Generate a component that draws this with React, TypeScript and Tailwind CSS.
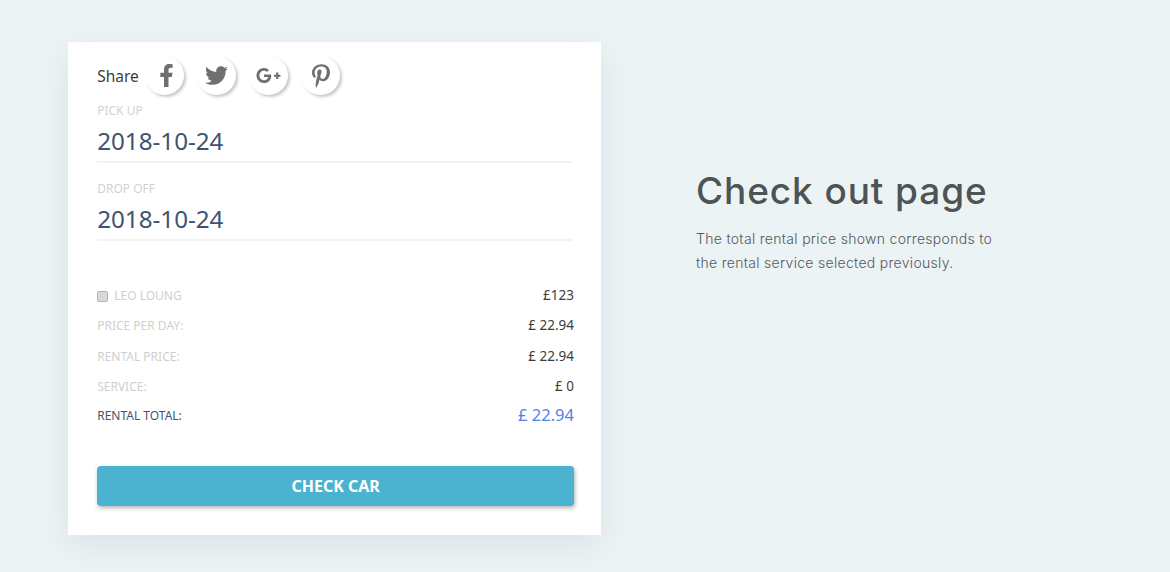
import { FaFacebookF, FaTwitter, FaGooglePlusG, FaPinterestP } from 'react-icons/fa'

const socials = [
  { id: 'facebook', icon: FaFacebookF, size: 'text-[23px] pl-[3px]' },
  { id: 'twitter', icon: FaTwitter, size: 'text-[23px]' },
  { id: 'google', icon: FaGooglePlusG, size: 'text-[25px]' },
  { id: 'pinterest', icon: FaPinterestP, size: 'text-[24px]' },
]

const rows = [
  { label: 'PRICE PER DAY:', value: '£ 22.94' },
  { label: 'RENTAL PRICE:', value: '£ 22.94' },
  { label: 'SERVICE:', value: '£ 0' },
]

function DateField({ label, value }: { label: string; value: string }) {
  return (
    <div className="mr-[1px] h-[62px] border-b-2 border-[#f0f3f5]">
      <div className="mt-[1px] h-[18px] text-[12px] leading-[18px] text-[#d2d2d2]">{label}</div>
      <div className="mt-[3px] text-[24.2px] leading-[36px] text-[#3f5470]">{value}</div>
    </div>
  )
}

export default function App() {
  return (
    <div className="flex h-[572px] w-[1170px] items-start overflow-hidden bg-[#ecf3f5] pl-[68px] pt-[42px] font-['Noto_Sans',sans-serif]">
      <div className="h-[493px] w-[533px] bg-white pl-[29.2px] pr-[27px] pt-[14px] shadow-[0_10px_30px_rgba(90,120,135,0.13)]">
        <div className="flex h-[40px] items-center">
          <span className="mr-[7px] mt-[2px] w-[41px] text-[15.5px] text-[#3d3d3d]">Share</span>
          <div className="-mt-[1px] flex gap-[13px]">
            {socials.map(({ id, icon: Icon, size }) => (
              <div
                key={id}
                className={`flex h-[39px] w-[39px] items-center justify-center rounded-full bg-white text-[#6f6f6f] shadow-[2px_2px_3px_rgba(0,0,0,0.22)] ${size}`}
              >
                <Icon />
              </div>
            ))}
          </div>
        </div>

        <div className="mt-[5px] flex flex-col gap-[16px]">
          <DateField label="PICK UP" value="2018-10-24" />
          <DateField label="DROP OFF" value="2018-10-24" />
        </div>

        <div className="mt-[39px] flex h-[30px] items-center justify-between text-[13.5px]">
          <label className="mt-[2px] flex items-center text-[12px] text-[#cfcfcf]">
            <span className="mr-[6px] h-[11px] w-[11px] rounded-[2px] border border-[#b5b5b8] bg-[#d9d9dc]" />
            LEO LOUNG
          </label>
          <span className="text-[#3d3d3d]">£123</span>
        </div>
        {rows.map((row) => (
          <div key={row.label} className="flex h-[30.5px] items-center justify-between text-[13.5px]">
            <span className="mt-[2px] text-[12px] text-[#cfcfcf]">{row.label}</span>
            <span className="text-[#3d3d3d]">{row.value}</span>
          </div>
        ))}
        <div className="-mt-[1px] flex h-[30px] items-center justify-between">
          <span className="text-[12px] text-[#3f5470]">RENTAL TOTAL:</span>
          <span className="text-[16.5px] text-[#4f82e8]">£ 22.94</span>
        </div>

        <button className="mt-[35px] h-[40px] w-full rounded-[4px] bg-[#4bb2d0] text-[16px] font-bold text-white shadow-[1px_2px_4px_rgba(0,0,0,0.3)]">
          CHECK CAR
        </button>
      </div>

      <div className="ml-[95px] mt-[124px] w-[330px] font-['Inter',sans-serif]">
        <h1 className="text-[37px] leading-[50px] font-medium tracking-[0.9px] text-[#505355]">Check out page</h1>
        <p className="mt-[11px] text-[14px] leading-[24px] font-light tracking-[0.3px] text-[#55585a]">
          The total rental price shown corresponds to
          <br />
          the rental service selected previously.
        </p>
      </div>
    </div>
  )
}
